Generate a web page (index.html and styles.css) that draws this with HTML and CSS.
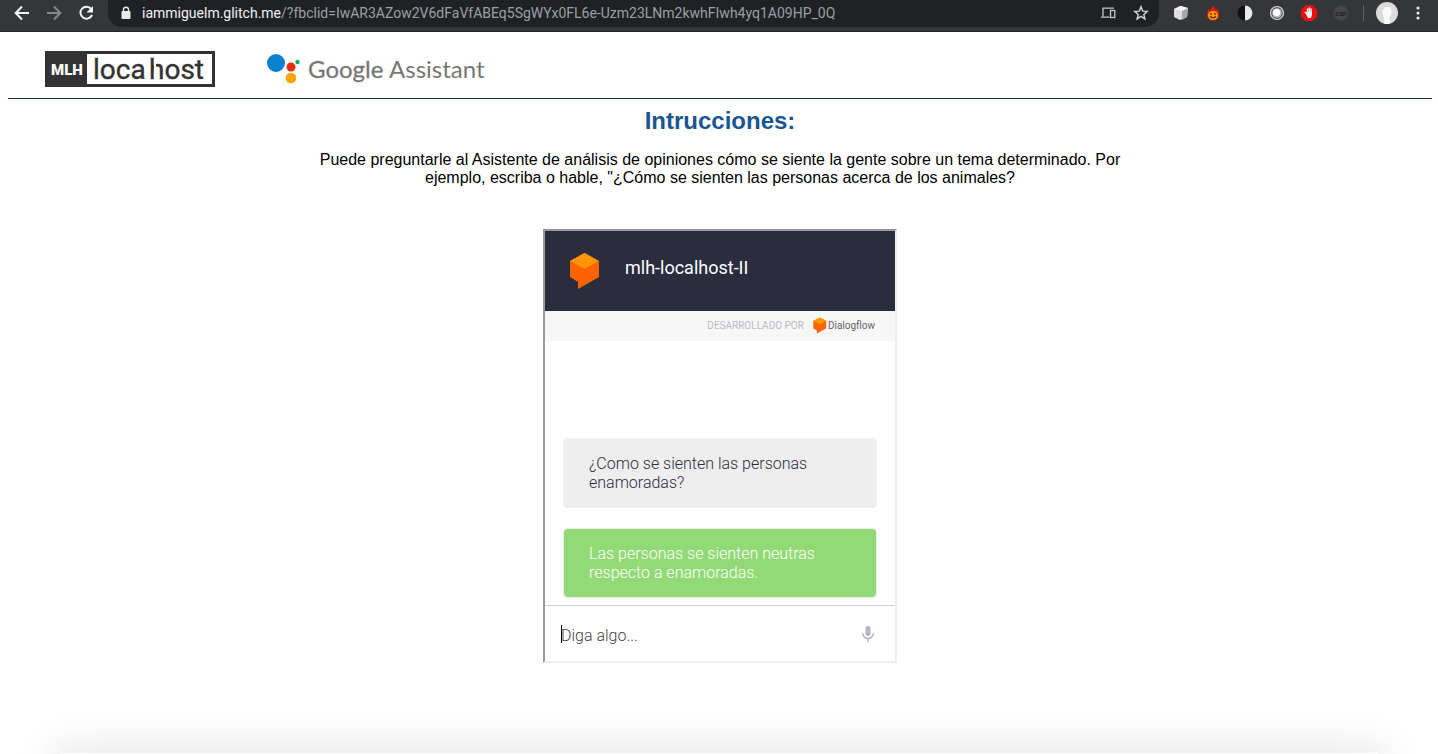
FILE: index.html
```html
<!DOCTYPE html>
<html lang="es">
<head>
<meta charset="utf-8">
<title>Asistente de análisis de opiniones</title>
<link rel="stylesheet" href="styles.css">
</head>
<body>
<div class="toolbar">
  <button class="tool" aria-label="Atrás"><svg width="20" height="20" viewBox="0 0 20 20" fill="none" stroke="#f1f3f4" stroke-width="2"><path d="M17 10H4M10 3.500 3.700 10 10 16.500"/></svg></button>
  <button class="tool" aria-label="Adelante"><svg width="20" height="20" viewBox="0 0 20 20" fill="none" stroke="#85878a" stroke-width="2"><path d="M3 10h13M10 3.500 16.300 10 10 16.500"/></svg></button>
  <button class="tool" aria-label="Recargar"><svg width="20" height="20" viewBox="0 0 20 20"><path d="M15.200 6A6 6 0 1 0 16 12" fill="none" stroke="#f1f3f4" stroke-width="2"/><path d="M17 3v6.500h-6.500z" fill="#f1f3f4"/></svg></button>
  <div class="address">
    <svg class="lock" width="12" height="14" viewBox="0 0 12 14"><rect x="1.500" y="5" width="9" height="8" rx="1" fill="#e8eaed"/><path d="M3.500 6V3.800a2.500 2.500 0 0 1 5 0V6" fill="none" stroke="#e8eaed" stroke-width="1.400"/></svg>
    <span class="url"><span class="host">iammiguelm.glitch.me</span>/?fbclid=IwAR3AZow2V6dFaVfABEq5SgWYx0FL6e-Uzm23LNm2kwhFIwh4yq1A09HP_0Q</span>
    <button class="tool" aria-label="Enviar a tus dispositivos"><svg width="16" height="16" viewBox="0 0 16 16" fill="none" stroke="#c4c6c9" stroke-width="1.300"><path d="M14 3.200H3v8M1 12.200h8.500"/><rect x="10.500" y="5.500" width="4.300" height="7"/></svg></button>
    <button class="tool" aria-label="Marcador"><svg width="16" height="16" viewBox="0 0 16 16" fill="none" stroke="#d5d7d9" stroke-width="1.400"><path d="m8 1.800 1.700 4.300 4.600.3-3.500 3 1.100 4.500L8 11.400l-3.900 2.500 1.100-4.500-3.500-3 4.600-.3z"/></svg></button>
  </div>
  <div class="extensions">
    <button class="tool" aria-label="Cubo"><svg width="16" height="16" viewBox="0 0 16 16"><path d="m7 1 8 2-1 9-7 3-6-3V4z" fill="#dedede"/><path d="m8 1 7 2-6 3-8-2z" fill="#f5f5f5"/><path d="m9 6 6-3-1 9-5 3z" fill="#a8a8a8"/></svg></button>
    <button class="tool" aria-label="Llama"><svg width="16" height="16" viewBox="0 0 16 16"><path d="M8 0c0 2 3 3 3 5l2-2c-1 2 1 4 1 7a6 6 0 0 1-12 0c0-3 1-3 1-6l2 2c0-2 3-3 3-6z" fill="#e81c0c"/><ellipse cx="8" cy="10.500" rx="5" ry="4.500" fill="#f59a13"/><path d="M6 8v2M10 8v2M5 11.500q3 2.500 6 0" fill="none" stroke="#5c1700" stroke-width="1.200"/></svg></button>
    <button class="tool" aria-label="Contraste"><svg width="16" height="16" viewBox="0 0 16 16"><circle cx="8" cy="8" r="7.500" fill="#111"/><path d="M8 .5a7.500 7.500 0 0 1 0 15z" fill="#e8e8e8"/></svg></button>
    <button class="tool" aria-label="Lente"><svg width="16" height="16" viewBox="0 0 16 16"><circle cx="8" cy="8" r="6.500" fill="#555" stroke="#ddd" stroke-width="1.200"/><circle cx="8" cy="8" r="4.800" fill="#bbb"/><circle cx="7.500" cy="7.500" r="3.500" fill="#fff"/></svg></button>
    <button class="tool" aria-label="Bloqueador"><svg width="16" height="16" viewBox="0 0 16 16"><path d="M4.700 0h6.600L16 4.700v6.600L11.300 16H4.700L0 11.300V4.700z" fill="#f20d0d"/><path d="M6.500 8V4M8.300 8V3M10.100 8V4M6.500 9 4.300 7.500" stroke="#fff" stroke-width="1.500" stroke-linecap="round"/><path d="M5.700 7H11v3l-1.300 3H7L5 9z" fill="#fff"/></svg></button>
    <button class="tool" aria-label="CSP"><svg width="16" height="16" viewBox="0 0 16 16"><circle cx="8" cy="8" r="7.500" fill="#454648"/><text class="csp" x="8" y="11" text-anchor="middle">CSP</text></svg></button>
  </div>
  <span class="divider"></span>
  <button class="tool" aria-label="Perfil"><svg width="22" height="22" viewBox="0 0 22 22"><circle cx="11" cy="11" r="11" fill="#dcdcdc"/><path d="M11 5c3 0 4.500 2 4.500 5 0 2-.5 4-2 5l.5 6.500q-3 1-6 0L8 15c-1.500-2-1.500-4-1.500-5 0-3 1.500-5 4.500-5z" fill="#f8fbfc"/></svg></button>
  <button class="tool" aria-label="Menú"><svg width="16" height="16" viewBox="0 0 16 16" fill="#e8eaed"><circle cx="8" cy="3" r="1.600"/><circle cx="8" cy="8" r="1.600"/><circle cx="8" cy="13" r="1.600"/></svg></button>
</div>

<div class="page">
  <header class="brands">
    <svg class="mlh" width="170" height="36" viewBox="0 0 170 36" role="img" aria-label="MLH localhost">
      <path d="M0 0h170v36H0z" fill="#333"/><path d="M42 3h125v30H42z" fill="#fff"/>
      <text class="mlh-text" x="6" y="24">MLH</text>
      <text class="local-text" x="48" y="28">loca</text>
      <text class="local-text" x="104" y="28">host</text>
      <path d="M109 10h2v19h-2z" fill="#fff"/>
    </svg>
    <svg class="google" width="218" height="34" viewBox="0 0 218 34" role="img" aria-label="Google Assistant">
      <circle cx="9" cy="12" r="9" fill="#0b7fd0"/><circle cx="24" cy="16" r="4.500" fill="#f32a14"/><circle cx="30.500" cy="11" r="2.200" fill="#0eb15d"/><circle cx="24" cy="27" r="5.300" fill="#fba400"/>
      <text class="google-text google-word" x="41" y="27">Google</text>
      <text class="google-text" x="122" y="27">Assistant</text>
    </svg>
  </header>
  <main class="content">
    <h2 class="heading">Intrucciones:</h2>
    <p class="intro">Puede preguntarle al Asistente de análisis de opiniones cómo se siente la gente sobre un tema determinado. Por ejemplo, escriba o hable, "¿Cómo se sienten las personas acerca de los animales?</p>
    <section class="chat">
      <div class="chat-head">
        <svg width="30" height="38" viewBox="0 0 30 38"><path d="m14.500 1 14.500 8v16L8 37v-7l-8-5V9z" fill="#ff6200"/><path d="m14.500 1 14.500 8-14.500 8L0 9z" fill="#ff9500"/></svg>
        <span class="agent">mlh-localhost-II</span>
      </div>
      <div class="powered"><span>DESARROLLADO POR</span>
        <a class="flow" href="#"><svg width="14" height="17" viewBox="0 0 30 38"><path d="m14.500 1 14.500 8v16L8 37v-7l-8-5V9z" fill="#ff6200"/><path d="m14.500 1 14.500 8-14.500 8L0 9z" fill="#ff9500"/></svg>Dialogflow</a>
      </div>
      <div class="messages">
        <p class="bubble">¿Como se sienten las personas enamoradas?</p>
        <p class="bubble reply">Las personas se sienten neutras respecto a enamoradas.</p>
      </div>
      <form class="ask">
        <span class="caret"></span>
        <input class="query" type="text" placeholder="Diga algo..." aria-label="Diga algo">
        <button class="tool" type="button" aria-label="Hablar"><svg width="14" height="18" viewBox="0 0 14 18"><rect x="4.500" y="1" width="5" height="10" rx="2.500" fill="#b4b7c3"/><path d="M1.500 8a5.500 5.500 0 0 0 11 0M7 13.500V17" fill="none" stroke="#b4b7c3" stroke-width="1.500"/></svg></button>
      </form>
    </section>
  </main>
</div>
<div class="shade"></div>
</body>
</html>
```
FILE: styles.css
```css
* { box-sizing: border-box; }
body { margin: 0; min-height: 100vh; display: flex; flex-direction: column; background: #fff; color: #000; font-family: "Liberation Sans", Arial, sans-serif; }
.tool { border: 0; padding: 0; background: none; display: flex; flex: none; }
.toolbar { display: flex; align-items: center; gap: 12px; height: 32px; padding: 0 12px 5px; background: #35363a; border-bottom: 1px solid #242528; }
.address { flex: 1; display: flex; align-items: center; gap: 17px; height: 27px; padding: 0 10px 0 12px; border-radius: 0 0 14px 14px; background: #202124; }
.lock { flex: none; }
.url { flex: 1; margin-left: -7px; color: #9aa0a6; font: 14px/20px Roboto, sans-serif; white-space: nowrap; overflow: hidden; }
.host { color: #f1f3f4; }
.extensions { display: flex; gap: 16px; padding: 0 2px; }
.csp { font: bold 6px Roboto, sans-serif; fill: #1c1c1c; }
.divider { width: 1px; height: 16px; background: #606164; }
.page { flex: 1; padding: 0 6px 0 8px; }
.brands { display: flex; align-items: flex-start; gap: 52px; padding: 19px 37px 11px; border-bottom: 1px solid #16305a; }
.mlh-text { font: 900 15px Roboto, sans-serif; fill: #fff; }
.local-text { font: 28px Roboto, sans-serif; fill: #333; stroke: #333; stroke-width: 0.4; }
.google-text { font: 24px Lato, sans-serif; fill: #777; }
.google-word { stroke: #777; stroke-width: 0.3; }
.content { display: flex; flex-direction: column; align-items: center; padding-top: 8px; }
.heading { margin: 0; font-size: 24px; line-height: 28px; color: #1b5593; }
.intro { max-width: 840px; margin: 16px 0 42px; font-size: 16px; line-height: 18px; text-align: center; }
.chat { width: 354px; border: 2px inset #eee; font-family: Roboto, sans-serif; }
.chat-head { display: flex; align-items: center; gap: 25px; height: 80px; padding: 0 25px; background: #2b2d3f; color: #fff; font-size: 18px; }
.agent { padding-bottom: 7px; }
.powered { display: flex; align-items: center; justify-content: flex-end; gap: 9px; height: 30px; padding: 0 20px 1px 0; background: #f7f7f7; color: #b7bac6; font-size: 10px; }
.flow { display: flex; align-items: center; gap: 1px; color: #666; text-decoration: none; }
.messages { display: flex; flex-direction: column; gap: 20px; padding: 97px 18px 7px; }
.bubble { margin: 0; padding: 15px 50px 15px 25px; border: 1px solid #eee; border-radius: 4px; background: #eee; color: #2b2d3f; font-size: 16px; font-weight: 300; line-height: 19px; }
.reply { background: #92da75; background-clip: padding-box; color: #fff; }
.ask { display: flex; align-items: center; height: 56px; padding: 0 20px 0 16px; border-top: 1px solid #d0d0d0; }
.caret { width: 1px; height: 18px; margin-right: -1px; background: #000; }
.query { flex: 1; min-width: 0; border: 0; padding: 3px 0 0; outline: 0; background: none; font: 300 16px Roboto, sans-serif; }
.query::placeholder { color: #444; opacity: 1; }
.shade { position: fixed; bottom: 0; left: 60px; right: 60px; height: 1px; box-shadow: 0 8px 40px 8px #00000030; }
```
